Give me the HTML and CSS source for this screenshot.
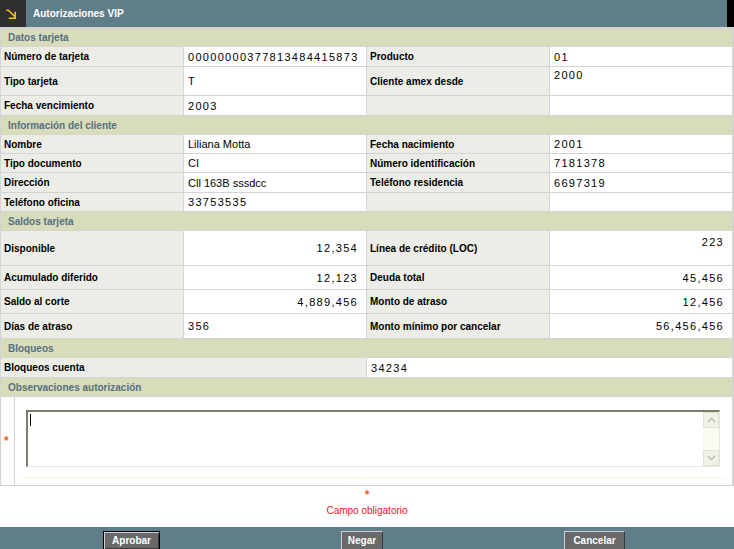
FILE: index.html
```html
<!DOCTYPE html>
<html lang="es">
<head>
<meta charset="utf-8">
<title>Autorizaciones VIP</title>
<link rel="stylesheet" href="styles.css">
</head>
<body>
<div class="page">
  <header class="titlebar">
    <div class="titlebar-icon">
      <svg width="10" height="10" viewBox="0 0 10 10" aria-hidden="true">
        <path d="M0.3 1.2 H2.4 L8.4 7.2" fill="none" stroke="#f2c521" stroke-width="1.6"/>
        <path d="M9.2 2.8 V9.2 H2.8" fill="none" stroke="#f2c521" stroke-width="1.6"/>
      </svg>
    </div>
    <h1 class="titlebar-title">Autorizaciones VIP</h1>
    <div class="titlebar-end"></div>
  </header>

  <div class="sheet">
    <div class="sec">Datos tarjeta</div>
    <div class="lbl">Número de tarjeta</div><div class="val num">00000000377813484415873</div>
    <div class="lbl">Producto</div><div class="val num">01</div>
    <div class="lbl">Tipo tarjeta</div><div class="val">T</div>
    <div class="lbl">Cliente amex desde</div><div class="val num top">2000</div>
    <div class="lbl">Fecha vencimiento</div><div class="val num">2003</div>
    <div class="lbl"></div><div class="val"></div>

    <div class="sec">Información del cliente</div>
    <div class="lbl">Nombre</div><div class="val">Liliana Motta</div>
    <div class="lbl">Fecha nacimiento</div><div class="val num">2001</div>
    <div class="lbl">Tipo documento</div><div class="val">CI</div>
    <div class="lbl">Número identificación</div><div class="val num">7181378</div>
    <div class="lbl">Dirección</div><div class="val">Cll 163B sssdcc</div>
    <div class="lbl">Teléfono residencia</div><div class="val num">6697319</div>
    <div class="lbl">Teléfono oficina</div><div class="val num">33753535</div>
    <div class="lbl"></div><div class="val"></div>

    <div class="sec">Saldos tarjeta</div>
    <div class="lbl">Disponible</div><div class="val num right">12,354</div>
    <div class="lbl">Línea de crédito (LOC)</div><div class="val num right top top-lg">223</div>
    <div class="lbl">Acumulado diferido</div><div class="val num right">12,123</div>
    <div class="lbl">Deuda total</div><div class="val num right">45,456</div>
    <div class="lbl">Saldo al corte</div><div class="val num right">4,889,456</div>
    <div class="lbl">Monto de atraso</div><div class="val num right">12,456</div>
    <div class="lbl">Días de atraso</div><div class="val num">356</div>
    <div class="lbl">Monto mínimo por cancelar</div><div class="val num right">56,456,456</div>

    <div class="sec">Bloqueos</div>
    <div class="lbl half">Bloqueos cuenta</div><div class="val num half">34234</div>

    <div class="sec">Observaciones autorización</div>
    <div class="obs">
      <div class="obs-mark">*</div>
      <div class="obs-main">
        <div class="textbox">
          <div class="textbox-text"><span class="caret"></span></div>
          <div class="scroll">
            <div class="scroll-btn">
              <svg width="9" height="6" viewBox="0 0 9 6" aria-hidden="true"><path d="M1 5 L4.5 1.5 L8 5" fill="none" stroke="#b8b8b0" stroke-width="1.4"/></svg>
            </div>
            <div class="scroll-track"></div>
            <div class="scroll-btn">
              <svg width="9" height="6" viewBox="0 0 9 6" aria-hidden="true"><path d="M1 1 L4.5 4.5 L8 1" fill="none" stroke="#b8b8b0" stroke-width="1.4"/></svg>
            </div>
          </div>
        </div>
        <div class="textbox-shade"></div>
      </div>
    </div>
  </div>

  <div class="required">
    <span class="required-star">*</span>
    <span class="required-text">Campo obligatorio</span>
  </div>

  <footer class="actions">
    <button class="btn btn-default btn-approve" type="button">Aprobar</button>
    <button class="btn btn-deny" type="button">Negar</button>
    <button class="btn btn-cancel" type="button">Cancelar</button>
  </footer>
</div>
</body>
</html>
```

FILE: styles.css
```css
* { box-sizing: border-box; }

html, body {
  margin: 0;
  padding: 0;
  background: #ffffff;
}

body {
  font-family: "Liberation Sans", Arial, sans-serif;
  font-size: 10px;
  color: #000;
}

.page {
  width: 734px;
  height: 549px;
  overflow: hidden;
  display: flex;
  flex-direction: column;
}

/* Title bar */
.titlebar {
  display: flex;
  height: 27px;
  background: #5f7e87;
}

.titlebar-icon {
  width: 26px;
  background: #2f2f2f;
  padding: 9px 0 0 6px;
}

.titlebar-icon svg { display: block; }

.titlebar-title {
  flex: 1;
  margin: 0;
  padding-left: 7px;
  font-size: 10px;
  font-weight: bold;
  color: #ffffff;
  line-height: 27px;
}

.titlebar-end {
  width: 7px;
  background: #000;
}

/* Data sheet */
.sheet {
  display: grid;
  grid-template-columns: 182px 182px 182px 182px;
  grid-template-rows: 17px 19px 28px 19px 18px 18px 18px 19px 18px 18px 34px 23px 23px 24px 18px 19px 18px 88px;
  gap: 1px;
  padding: 2px 1px 1px 1px;
  background: #d4d4d4;
}

.sec {
  grid-column: 1 / -1;
  background: #d8dcbb;
  color: #56707f;
  font-weight: bold;
  padding-left: 7px;
  display: flex;
  align-items: center;
}

.lbl {
  background: #ecede6;
  font-weight: bold;
  padding-left: 3px;
  display: flex;
  align-items: center;
}

.val {
  background: #ffffff;
  font-size: 11px;
  padding-left: 4px;
  padding-right: 8px;
  display: flex;
  align-items: center;
}

.num { letter-spacing: 1.3px; }

.right { justify-content: flex-end; }

.top {
  align-items: flex-start;
  padding-top: 2px;
}

.top-lg { padding-top: 5px; }

.half { grid-column: span 2; }

/* Observaciones */
.obs {
  grid-column: 1 / -1;
  display: flex;
  gap: 1px;
}

.obs-mark {
  width: 13px;
  background: #ffffff;
  color: #f45a24;
  font-size: 12px;
  font-weight: bold;
  display: flex;
  align-items: center;
  padding-left: 3px;
}

.obs-main {
  flex: 1;
  background: #ffffff;
  padding: 13px 12px 0 11px;
}

.textbox {
  display: flex;
  height: 57px;
  border-top: 2px solid #7c7b6c;
  border-left: 2px solid #7c7b6c;
  border-right: 1px solid #e6e6dc;
  border-bottom: 1px solid #e6e6dc;
  background: #ffffff;
}

.textbox-text {
  flex: 1;
  padding: 2px 0 0 2px;
}

.caret {
  display: block;
  width: 1px;
  height: 12px;
  background: #000;
}

.scroll {
  width: 16px;
  display: flex;
  flex-direction: column;
  background: #fbfbf4;
}

.scroll-btn {
  height: 16px;
  background: #f1f1ea;
  border: 1px solid #e2e2da;
  display: flex;
  align-items: center;
  justify-content: center;
}

.scroll-track { flex: 1; }

.textbox-shade {
  height: 2px;
  margin: 10px -6px 0 -4px;
  background: #fdfaef;
}

/* Required note */
.required {
  height: 41px;
  display: flex;
  flex-direction: column;
  align-items: center;
  padding-top: 3px;
}

.required-star {
  color: #f45a24;
  font-size: 12px;
  font-weight: bold;
  line-height: 12px;
}

.required-text {
  color: #e8141c;
  font-size: 10px;
  line-height: 14px;
  margin-top: 3px;
}

/* Footer actions */
.actions {
  height: 22px;
  background: #5f7e87;
  display: flex;
  gap: 181px;
  padding: 4px 0 0 103px;
}

.btn {
  height: 19px;
  padding: 0;
  background: #696969;
  color: #ffffff;
  font-family: "Liberation Sans", Arial, sans-serif;
  font-size: 10px;
  font-weight: bold;
  border: 1px solid;
  border-color: #cfcfcf #3a3a3a #3a3a3a #cfcfcf;
  text-align: center;
}

.btn-default {
  border-color: #000;
  box-shadow: inset 1px 1px 0 #d0d0d0, inset -1px -1px 0 #3a3a3a;
}

.btn-approve { width: 57px; }
.btn-deny { width: 42px; }
.btn-cancel { width: 61px; }
```
